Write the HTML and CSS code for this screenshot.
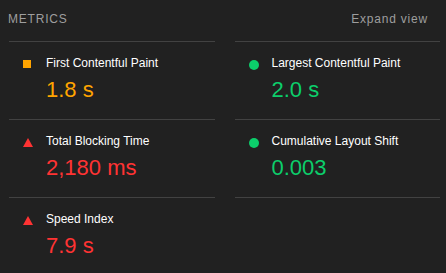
FILE: index.html
```html
<!DOCTYPE html>
<html lang="en">
<head>
<meta charset="utf-8">
<title>Metrics</title>
<link rel="stylesheet" href="styles.css">
</head>
<body>
<section class="metrics">
  <header class="metrics-header">
    <span class="metrics-title">Metrics</span>
    <button class="expand" type="button">Expand view</button>
  </header>
  <div class="metrics-grid">
    <div class="metric metric--average">
      <span class="icon"><span class="sq"></span></span>
      <span class="label">First Contentful Paint</span>
      <span class="value">1.8&nbsp;s</span>
    </div>
    <div class="metric metric--pass">
      <span class="icon"><span class="dot"></span></span>
      <span class="label">Largest Contentful Paint</span>
      <span class="value">2.0&nbsp;s</span>
    </div>
    <div class="metric metric--fail">
      <span class="icon"><svg width="10" height="9" viewBox="0 0 10 9"><polygon points="5,0 10,9 0,9" fill="#ff3333"/></svg></span>
      <span class="label">Total Blocking Time</span>
      <span class="value">2,180&nbsp;ms</span>
    </div>
    <div class="metric metric--pass">
      <span class="icon"><span class="dot"></span></span>
      <span class="label">Cumulative Layout Shift</span>
      <span class="value">0.003</span>
    </div>
    <div class="metric metric--fail">
      <span class="icon"><svg width="10" height="9" viewBox="0 0 10 9"><polygon points="5,0 10,9 0,9" fill="#ff3333"/></svg></span>
      <span class="label">Speed Index</span>
      <span class="value">7.9&nbsp;s</span>
    </div>
  </div>
</section>
</body>
</html>
```

FILE: styles.css
```css
html, body {
  margin: 0;
  padding: 0;
  background: #212121;
}
body {
  font-family: "Liberation Sans", Arial, sans-serif;
  color: #fff;
  overflow: hidden;
}
.metrics {
  padding: 0 6px 0 8px;
}
.metrics-header {
  display: flex;
  justify-content: space-between;
  align-items: center;
  padding: 10px 0 13px 0;
  height: 18px;
}
.metrics-title {
  font-size: 12px;
  line-height: 18px;
  text-transform: uppercase;
  letter-spacing: 0.8px;
  color: #9e9e9e;
}
.expand {
  background: none;
  border: 0;
  padding: 0;
  margin: 0 12px 0 0;
  font-family: inherit;
  font-size: 12px;
  line-height: 18px;
  letter-spacing: 0.8px;
  color: #9e9e9e;
  cursor: pointer;
}
.metrics-grid {
  display: grid;
  grid-template-columns: 1fr 1fr;
  column-gap: 20px;
  padding-left: 1px;
}
.metric {
  display: grid;
  grid-template-columns: 10px 1fr;
  grid-template-rows: 18px 28px;
  column-gap: 13px;
  row-gap: 4px;
  padding: 12px 0 15px 14px;
  border-bottom: 1px solid #424242;
}
.metric:nth-child(-n+2) {
  border-top: 1px solid #424242;
}
.icon {
  grid-row: 1;
  grid-column: 1;
  display: block;
  margin-top: 6px;
  height: 10px;
  position: relative;
}
.icon svg {
  display: block;
}
.sq {
  display: block;
  width: 8px;
  height: 8px;
  background: #ffa400;
}
.dot {
  display: block;
  width: 10px;
  height: 10px;
  border-radius: 50%;
  background: #0cce6b;
}
.label {
  grid-row: 1;
  grid-column: 2;
  font-size: 12px;
  line-height: 18px;
  color: #fff;
  white-space: nowrap;
}
.value {
  grid-row: 2;
  grid-column: 2;
  font-size: 22px;
  line-height: 28px;
  white-space: nowrap;
}
.metric--average .value { color: #ffa400; }
.metric--pass .value { color: #0cce6b; }
.metric--fail .value { color: #ff3333; }
```
